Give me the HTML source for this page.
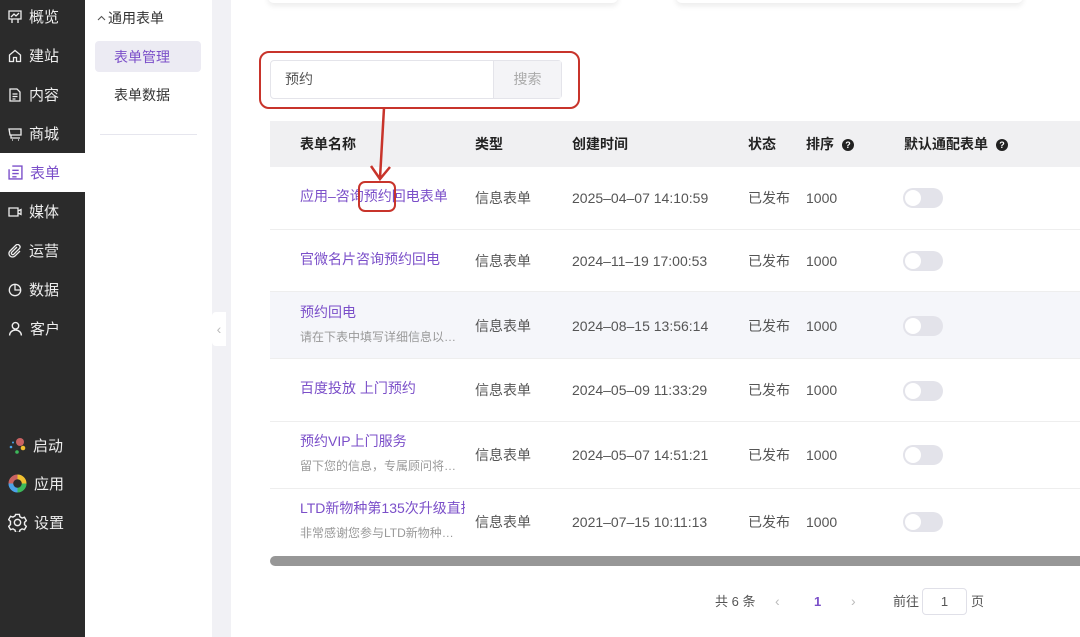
<!DOCTYPE html>
<html><head><meta charset="utf-8"><style>
*{margin:0;padding:0;box-sizing:border-box}
body{width:1080px;height:637px;overflow:hidden;position:relative;background:#fff;font-family:"Liberation Sans","Noto Sans CJK SC",sans-serif;font-size:14px;color:#333}
.a{position:absolute}
#side{left:0;top:0;width:85px;height:637px;background:#2b2b2b}
.mi{position:absolute;left:0;width:85px;height:39px;color:#eee;font-size:15px;display:flex;align-items:center}
.mi svg{margin-left:8px;margin-right:7px}
.mi.on{background:#fff;color:#7b4fc9}
#sub{left:85px;top:0;width:127px;height:637px;background:#fff}
#gap{left:212px;top:0;width:19px;height:637px;background:#f1f1f5}
.th{position:absolute;top:134px;font-weight:bold;font-size:14px;color:#222;line-height:20px}
.row{position:absolute;left:270px;width:810px;border-bottom:1px solid #eee}
.c{position:absolute;font-size:14px;color:#555;line-height:20px}
.nm{color:#7b4fc9;font-size:14px}
.ds{color:#999;font-size:12px}
.sw{position:absolute;left:903px;width:40px;height:20px;border-radius:10px;background:#e3e3ea}
.sw:after{content:"";position:absolute;left:2px;top:2px;width:16px;height:16px;border-radius:50%;background:#fff}
.q{display:inline-block;width:12px;height:12px;border-radius:50%;background:#222;color:#fff;font-size:9px;text-align:center;line-height:12px;margin-left:8px;vertical-align:1px}
</style></head><body>
<div id="side" class="a">
<div class="mi" style="top:-3px"><svg width="14" height="14" viewBox="0 0 14 14" fill="none" stroke="#eee" stroke-width="1.3"><path d="M1 1h12v8H1zM3 7l3-3 2 2 3-3M4 9v4M10 9v4"/></svg>概览</div>
<div class="mi" style="top:36px"><svg width="14" height="14" viewBox="0 0 14 14" fill="none" stroke="#eee" stroke-width="1.3"><path d="M1.5 6L7 1.5 12.5 6v6.5h-4v-4h-3v4h-4z"/></svg>建站</div>
<div class="mi" style="top:75px"><svg width="14" height="14" viewBox="0 0 14 14" fill="none" stroke="#eee" stroke-width="1.3"><path d="M2 1h7l3 3v9H2zM4.5 6h5M4.5 8.5h5M4.5 11h3"/></svg>内容</div>
<div class="mi" style="top:114px"><svg width="14" height="14" viewBox="0 0 14 14" fill="none" stroke="#eee" stroke-width="1.3"><path d="M1 2h12v6H2zM3 8v3h9M4 13h1M10 13h1"/></svg>商城</div>
<div class="mi on" style="top:153px"><svg width="15" height="15" viewBox="0 0 14 14" fill="none" stroke="#7b4fc9" stroke-width="1.3"><path d="M4 1h9v12H1V4M4 5h6M4 8h6M4 11h4"/></svg>表单</div>
<div class="mi" style="top:192px"><svg width="14" height="14" viewBox="0 0 14 14" fill="none" stroke="#eee" stroke-width="1.3"><path d="M1 3h9v8H1zM10 6l3-1.5v5L10 8"/></svg>媒体</div>
<div class="mi" style="top:231px"><svg width="14" height="14" viewBox="0 0 14 14" fill="none" stroke="#eee" stroke-width="1.3"><path d="M9 3L3.5 8.5a1.5 1.5 0 002 2L11.5 4.5a2.5 2.5 0 00-3.5-3.5L2 7a3.5 3.5 0 005 5l5-5"/></svg>运营</div>
<div class="mi" style="top:270px"><svg width="14" height="14" viewBox="0 0 14 14" fill="none" stroke="#eee" stroke-width="1.3"><circle cx="7" cy="7" r="5.7"/><path d="M7 1.3V7h5.7"/></svg>数据</div>
<div class="mi" style="top:309px"><svg width="15" height="15" viewBox="0 0 14 14" fill="none" stroke="#eee" stroke-width="1.3"><circle cx="7" cy="4.5" r="3"/><path d="M1.5 13.5c0-3 2.5-5 5.5-5s5.5 2 5.5 5"/></svg>客户</div>
<div class="mi" style="top:426px"><svg width="18" height="18" viewBox="0 0 18 18"><circle cx="12" cy="5" r="4" fill="#c96262"/><circle cx="15" cy="11" r="2.3" fill="#f0c030"/><circle cx="9" cy="15" r="1.8" fill="#3cb95a"/><circle cx="3" cy="10" r="1.3" fill="#4ba2e8"/><circle cx="5" cy="5.5" r="1" fill="#4ba2e8"/></svg>启动</div>
<div class="mi" style="top:464px"><svg width="19" height="19" viewBox="0 0 20 20" fill="none" stroke-width="5"><path d="M3 10a7 7 0 017-7" stroke="#c96262"/><path d="M10 3a7 7 0 017 7" stroke="#f0c030"/><path d="M17 10a7 7 0 01-7 7" stroke="#3cb95a"/><path d="M10 17a7 7 0 01-7-7" stroke="#4ba2e8"/></svg>应用</div>
<div class="mi" style="top:503px"><svg width="19" height="19" viewBox="0 0 20 20" fill="none" stroke="#eee" stroke-width="1.5"><path d="M8 1.5h4l.6 2.5 2.2 1.3 2.5-.8 2 3.5-1.9 1.8v2.4l1.9 1.8-2 3.5-2.5-.8-2.2 1.3-.6 2.5H8l-.6-2.5-2.2-1.3-2.5.8-2-3.5 1.9-1.8V8.8L.7 7l2-3.5 2.5.8 2.2-1.3z"/><circle cx="10" cy="10" r="3.3"/></svg>设置</div>
</div>
<div id="sub" class="a">
<svg class="a" style="left:12px;top:15px" width="9" height="6" viewBox="0 0 9 6" fill="none" stroke="#555" stroke-width="1.1"><path d="M1 5l3.5-3.5L8 5"/></svg>
<div class="a" style="left:23px;top:8px;font-size:14px;color:#333;line-height:20px">通用表单</div>
<div class="a" style="left:10px;top:41px;width:106px;height:31px;background:#ecebf3;border-radius:4px;color:#7b4fc9;padding:6px 0 0 19px;line-height:20px">表单管理</div>
<div class="a" style="left:29px;top:85px;color:#333;line-height:20px">表单数据</div>
<div class="a" style="left:15px;top:134px;width:97px;height:1px;background:#e6e6ee"></div>
</div>
<div id="gap" class="a"></div>
<div class="a" style="left:212px;top:312px;width:14px;height:34px;background:#fff;border-radius:4px 0 0 4px;color:#bbb;font-size:14px;text-align:center;line-height:34px">‹</div>
<div class="a" style="left:268px;top:-10px;width:350px;height:13px;background:#fff;border-radius:6px;box-shadow:0 3px 6px rgba(0,0,0,.08)"></div>
<div class="a" style="left:676px;top:-10px;width:347px;height:13px;background:#fff;border-radius:6px;box-shadow:0 3px 6px rgba(0,0,0,.08)"></div>
<!-- search -->
<div class="a" style="left:270px;top:60px;width:292px;height:39px;border:1px solid #e4e4ea;border-radius:4px"></div>
<div class="a" style="left:493px;top:61px;width:68px;height:37px;background:#f4f4f7;border-left:1px solid #e4e4ea;color:#aaa;text-align:center;line-height:37px">搜索</div>
<div class="a" style="left:285px;top:69px;color:#555;line-height:20px">预约</div>
<!-- table -->
<div class="a" style="left:270px;top:121px;width:810px;height:46px;background:#f0f0f2"></div>
<div class="th" style="left:300px">表单名称</div>
<div class="th" style="left:475px">类型</div>
<div class="th" style="left:572px">创建时间</div>
<div class="th" style="left:748px">状态</div>
<div class="th" style="left:806px">排序<span class="q">?</span></div>
<div class="th" style="left:904px">默认通配表单<span class="q">?</span></div>

<div class="row" style="top:167px;height:63px"></div>
<div class="c nm" style="left:300px;top:186px">应用–咨询预约回电表单</div>
<div class="c" style="left:475px;top:188px">信息表单</div><div class="c" style="left:572px;top:188px">2025–04–07 14:10:59</div><div class="c" style="left:748px;top:188px">已发布</div><div class="c" style="left:806px;top:188px">1000</div><div class="sw" style="top:188px"></div>

<div class="row" style="top:230px;height:62px"></div>
<div class="c nm" style="left:300px;top:249px">官微名片咨询预约回电</div>
<div class="c" style="left:475px;top:251px">信息表单</div><div class="c" style="left:572px;top:251px">2024–11–19 17:00:53</div><div class="c" style="left:748px;top:251px">已发布</div><div class="c" style="left:806px;top:251px">1000</div><div class="sw" style="top:251px"></div>

<div class="row" style="top:292px;height:67px;background:#f5f6fa"></div>
<div class="c nm" style="left:300px;top:302px">预约回电</div><div class="c ds" style="left:300px;top:327px">请在下表中填写详细信息以…</div>
<div class="c" style="left:475px;top:316px">信息表单</div><div class="c" style="left:572px;top:316px">2024–08–15 13:56:14</div><div class="c" style="left:748px;top:316px">已发布</div><div class="c" style="left:806px;top:316px">1000</div><div class="sw" style="top:316px"></div>

<div class="row" style="top:359px;height:63px"></div>
<div class="c nm" style="left:300px;top:378px">百度投放 上门预约</div>
<div class="c" style="left:475px;top:380px">信息表单</div><div class="c" style="left:572px;top:380px">2024–05–09 11:33:29</div><div class="c" style="left:748px;top:380px">已发布</div><div class="c" style="left:806px;top:380px">1000</div><div class="sw" style="top:381px"></div>

<div class="row" style="top:422px;height:67px"></div>
<div class="c nm" style="left:300px;top:431px">预约VIP上门服务</div><div class="c ds" style="left:300px;top:456px">留下您的信息，专属顾问将…</div>
<div class="c" style="left:475px;top:445px">信息表单</div><div class="c" style="left:572px;top:445px">2024–05–07 14:51:21</div><div class="c" style="left:748px;top:445px">已发布</div><div class="c" style="left:806px;top:445px">1000</div><div class="sw" style="top:445px"></div>

<div class="row" style="top:489px;height:66px;border:none"></div>
<div class="c nm" style="left:300px;top:498px;width:165px;overflow:hidden;white-space:nowrap">LTD新物种第135次升级直播</div><div class="c ds" style="left:300px;top:523px">非常感谢您参与LTD新物种…</div>
<div class="c" style="left:475px;top:512px">信息表单</div><div class="c" style="left:572px;top:512px">2021–07–15 10:11:13</div><div class="c" style="left:748px;top:512px">已发布</div><div class="c" style="left:806px;top:512px">1000</div><div class="sw" style="top:512px"></div>

<div class="a" style="left:270px;top:556px;width:810px;height:10px;background:#979797;border-radius:5px 0 0 5px"></div>
<!-- annotations on top -->
<div class="a" style="left:259px;top:51px;width:321px;height:58px;border:2px solid #c8342b;border-radius:10px"></div>
<svg class="a" style="left:360px;top:108px" width="40" height="80" viewBox="0 0 40 80"><path d="M24 0L20 70M11 58l9 13 10-12" fill="none" stroke="#c8342b" stroke-width="2.5"/></svg>
<div class="a" style="left:358px;top:181px;width:38px;height:31px;border:2px solid #c8342b;border-radius:7px"></div>
<!-- pagination -->
<div class="c" style="left:715px;top:592px;color:#555;font-size:13px">共 6 条</div>
<div class="c" style="left:775px;top:591px;color:#bbb">‹</div>
<div class="c" style="left:814px;top:592px;color:#7b4fc9;font-weight:bold;font-size:13px">1</div>
<div class="c" style="left:851px;top:591px;color:#bbb">›</div>
<div class="c" style="left:893px;top:592px;color:#555;font-size:13px">前往</div>
<div class="a" style="left:922px;top:588px;width:45px;height:27px;border:1px solid #e0e0e8;border-radius:4px;text-align:center;line-height:25px;color:#555;font-size:13px">1</div>
<div class="c" style="left:971px;top:592px;color:#555;font-size:13px">页</div>
</body></html>
